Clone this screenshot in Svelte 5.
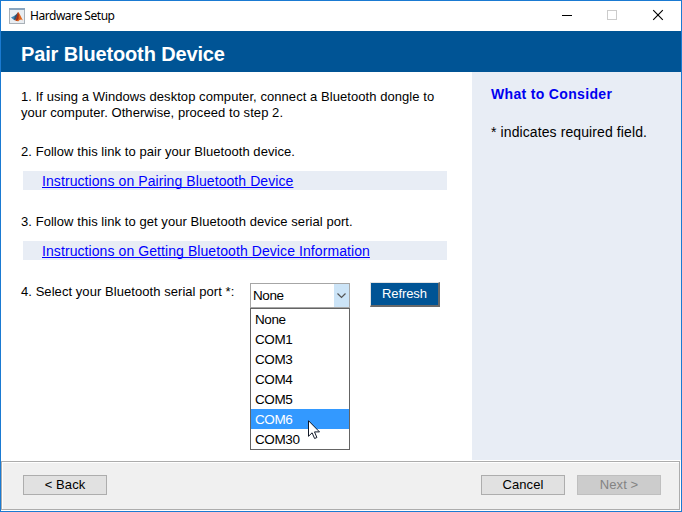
<script>
  const ports = ['None', 'COM1', 'COM3', 'COM4', 'COM5', 'COM6', 'COM30'];
  const active = 'COM6';
</script>

<div class="window">
  <div class="titlebar">
    <svg class="logo" width="16" height="16" viewBox="0 0 16 16">
      <rect x=".5" y=".5" width="15" height="15" fill="#e9edf1" stroke="#a9b0b7" />
      <rect x="0" y="0" width="16" height="2" fill="#8ba6bf" />
      <path d="M2 9.5l4-2 2 2-3 2.5z" fill="#3f83b5" />
      <path d="M6 7.5l3-3 0 5-3 3-1-1z" fill="#31536e" />
      <path d="M9 4c1 0 2.5 4 5 8.500-2-2-3-1-5 1-1-1-2-1-3-1 2-2 2-5 3-8.500z" fill="#e0661c" />
      <path d="M9 4l.8 3-.3 4-2 2-1-1c1-2 1.500-4 2.500-8z" fill="#a12c16" />
    </svg>
    <span class="caption">Hardware Setup</span>
    <svg class="controls" width="104" height="12" viewBox="0 0 104 12" shape-rendering="crispEdges">
      <path d="M1 6.5h10" stroke="#000" />
      <rect x="46.500" y="1.500" width="9" height="9" fill="none" stroke="#ccc" />
      <path d="M92.200 1.200l9.600 9.600M101.800 1.200l-9.600 9.600" stroke="#000" shape-rendering="auto" stroke-width="1.150" />
    </svg>
  </div>
  <h1>Pair Bluetooth Device</h1>
  <div class="body">
    <main>
      <p>1. If using a Windows desktop computer, connect a Bluetooth dongle to<br />your computer. Otherwise, proceed to step 2.</p>
      <p class="second">2. Follow this link to pair your Bluetooth device.</p>
      <div class="strip"><a href="#pair">Instructions on Pairing Bluetooth Device</a></div>
      <p class="third">3. Follow this link to get your Bluetooth device serial port.</p>
      <div class="strip"><a href="#info">Instructions on Getting Bluetooth Device Information</a></div>
      <div class="row">
        <span class="label">4. Select your Bluetooth serial port *:</span>
        <div class="select">
          <div class="value"><span>None</span>
            <i><svg width="9" height="6" viewBox="0 0 9 6"><path d="M.5 .5l4 4 4-4" fill="none" stroke="#555" stroke-width="1.200" /></svg></i>
          </div>
          <div class="menu">
            {#each ports as port}
              <div class="option" class:active={port === active}>{port}</div>
            {/each}
          </div>
          <svg class="cursor" width="13" height="20" viewBox="0 0 13 20">
            <path d="M.5 .7v15.600l3.600-3.500 2.500 5.700 2.300-1-2.400-5.600h5z" fill="#fff" stroke="#111827" />
          </svg>
        </div>
        <button class="refresh">Refresh</button>
      </div>
    </main>
    <aside>
      <h2>What to Consider</h2>
      <p>* indicates required field.</p>
    </aside>
  </div>
  <footer>
    <button class="back">&lt; Back</button>
    <button class="cancel">Cancel</button>
    <button class="next" disabled>Next &gt;</button>
  </footer>
</div>

<style>
  .window {
    box-sizing: border-box;
    width: 682px;
    height: 512px;
    border: 1px solid #1a7ad2;
    background: #fff;
    display: flex;
    flex-direction: column;
    overflow: hidden;
    font: 13px/16px "Liberation Sans", Arial, sans-serif;
    color: #000;
    white-space: nowrap;
  }
  .titlebar {
    height: 30px;
    flex: none;
    display: flex;
    align-items: center;
    padding: 0 16px 0 8px;
  }
  .logo { margin-bottom: 1px; }
  .caption {
    font: 12px/16px "Noto Sans", "Open Sans", sans-serif;
    letter-spacing: -0.46px;
    margin-left: 5px;
  }
  .controls { margin-left: auto; margin-bottom: 2px; }
  h1 {
    margin: 0;
    height: 41px;
    flex: none;
    background: #005495;
    color: #fff;
    font-size: 20px;
    line-height: 47px;
    letter-spacing: -0.14px;
    padding-left: 20px;
  }
  .body { display: flex; height: 388px; flex: none; }
  main { width: 471px; box-sizing: border-box; padding: 17px 0 0 20px; letter-spacing: 0.06px; }
  p { margin: 0; }
  .second { margin-top: 23px; }
  .third { margin-top: 24px; }
  .strip {
    width: 424px;
    height: 19px;
    box-sizing: border-box;
    margin: 11px 0 0 2px;
    padding-left: 19px;
    background: #e8edf5;
    font-size: 14px;
    line-height: 20px;
    letter-spacing: 0.08px;
  }
  .strip a {
    color: #00f;
    text-decoration-thickness: 1px;
    text-underline-offset: 1px;
    text-decoration-skip-ink: none;
  }
  .row { display: flex; margin-top: 22px; }
  .label { width: 229px; padding-top: 2px; }
  .select { position: relative; width: 100px; margin-top: 1px; font-size: 13.500px; letter-spacing: -0.4px; }
  .value {
    box-sizing: border-box;
    height: 25px;
    border: 1px solid #a6a6a6;
    display: flex;
    justify-content: space-between;
    line-height: 23px;
    padding-left: 2px;
  }
  .value i {
    width: 15px;
    background: #cce4f7;
    display: flex;
    align-items: center;
    justify-content: center;
  }
  .menu {
    position: absolute;
    top: 25px;
    left: 0;
    width: 100px;
    box-sizing: border-box;
    border: 1px solid #646464;
    background: #fff;
  }
  .option { height: 20px; line-height: 21px; padding-left: 4px; }
  .option.active { background: #3399ff; color: #fff; }
  .cursor { position: absolute; left: 58px; top: 137px; }
  button {
    font: 13px/16px "Liberation Sans", Arial, sans-serif;
    padding: 0;
    box-sizing: border-box;
    color: #000;
  }
  .refresh {
    width: 70px;
    height: 25px;
    margin-left: 20px;
    background: #005495;
    color: #fff;
    letter-spacing: -0.1px;
    border: 2px solid;
    border-color: #e3e3e3 #696969 #696969 #e3e3e3;
    border-width: 1px 2px 2px 1px;
  }
  aside { flex: 1; background: #e8edf5; padding: 14px 0 0 19px; font-size: 14px; letter-spacing: 0.1px; }
  h2 { margin: 0; font-size: 14px; line-height: 16px; letter-spacing: 0.33px; color: #0000f0; }
  aside p { margin-top: 22px; }
  footer {
    height: 49px;
    margin: 1px 1px 0 0;
    box-sizing: border-box;
    border: 1px solid #acacac;
    box-shadow: inset 1px 1px #fff;
    background: #f0f0f0;
    display: flex;
    padding: 13px 18px 0 21px;
  }
  footer button {
    width: 84px;
    height: 20px;
    border: 1px solid #adadad;
    background: #e1e1e1;
    line-height: 18px;
    letter-spacing: 0.1px;
  }
  .cancel { margin-left: auto; }
  footer .next { margin-left: 12px; background: #ccc; border-color: #bfbfbf; color: #838383; }
</style>
